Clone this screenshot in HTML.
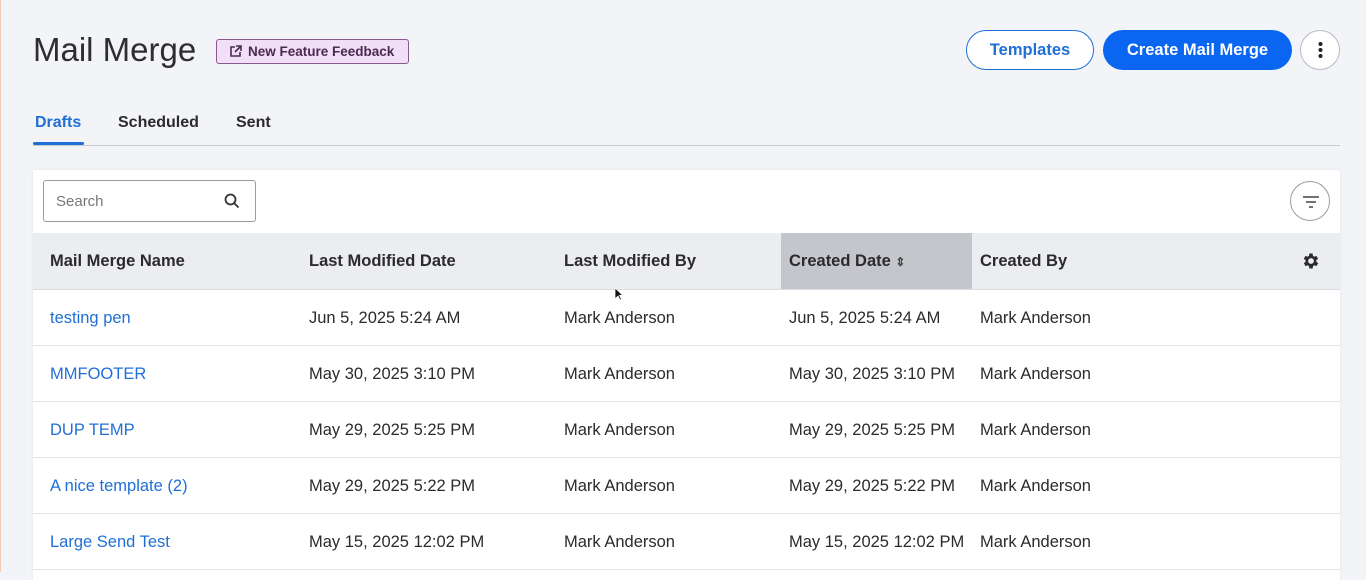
<!DOCTYPE html>
<html><head><style>
*{box-sizing:border-box;margin:0;padding:0}
body{width:1366px;height:572px;overflow:hidden;background:#f3f4f8;font-family:"Liberation Sans",sans-serif;color:#2b2b2e;position:relative}
.abs{position:absolute}
h1{position:absolute;left:33px;top:31px;font-size:33px;font-weight:400;color:#2e2e30}
.fb{position:absolute;left:216px;top:39px;width:193px;height:25px;border:1.5px solid #8a5a8e;background:#f1def7;border-radius:3px;font-size:13.5px;font-weight:700;color:#4a2b50;padding-left:31px;line-height:23px}
.btn{position:absolute;top:30px;height:40px;border-radius:20px;font-size:16.5px;font-weight:700;text-align:center;line-height:40px}
.tabs{position:absolute;left:33px;top:114px;font-size:16px;font-weight:700}
.tabs span{position:absolute;white-space:nowrap}
.card{position:absolute;left:33px;top:170px;width:1307px;height:410px;background:#fff;box-shadow:0 0 3px rgba(0,0,0,.08)}
.hdr{position:absolute;left:0;top:63px;width:1307px;height:57px;background:#ecedf1;border-bottom:1px solid #dcdde2}
.row{position:absolute;left:0;width:1307px;height:56px;border-bottom:1px solid #e3e4e8;font-size:16.5px}
.c{position:absolute;top:1px;line-height:55px;white-space:nowrap}
.hdr .c{font-weight:700;line-height:55px;font-size:16.5px}
a{color:#1f6fd6;text-decoration:none}
</style></head><body>
<div class="abs" style="left:0;top:0;width:1px;height:572px;background:#f3c9b8"></div>
<h1>Mail Merge</h1>
<div class="fb"><svg class="abs" style="left:12px;top:5px" width="13" height="13" viewBox="0 0 13 13" fill="none" stroke="#4a2b50" stroke-width="1.6"><path d="M6 2H2v9h9V7"/><path d="M7 1h5v5M12 1L6 7"/></svg>New Feature Feedback</div>
<div class="btn" style="left:966px;width:128px;border:1.5px solid #1f6fd6;background:#fff;color:#1f6fd6;line-height:39px">Templates</div>
<div class="btn" style="left:1103px;width:189px;background:#0a66f0;color:#fff">Create Mail Merge</div>
<div class="abs" style="left:1300px;top:30px;width:40px;height:40px;border-radius:50%;border:1px solid #b9bac0;background:#fff"><svg class="abs" style="left:17px;top:10px" width="5" height="18"><circle cx="2.5" cy="3" r="2" fill="#222"/><circle cx="2.5" cy="9" r="2" fill="#222"/><circle cx="2.5" cy="15" r="2" fill="#222"/></svg></div>
<div class="tabs"><span style="left:2px;color:#1f6fd6">Drafts</span><span style="left:85px">Scheduled</span><span style="left:203px">Sent</span></div>
<div class="abs" style="left:33px;top:145px;width:1307px;height:1px;background:#c9cace"></div>
<div class="abs" style="left:33px;top:142px;width:51px;height:3px;background:#1f6fd6;border-radius:2px"></div>
<div class="card">
<div class="abs" style="left:10px;top:10px;width:213px;height:42px;border:1px solid #9a9ba0;border-radius:3px;font-size:15px;color:#777;padding:12px 0 0 12px">Search
<svg class="abs" style="left:180px;top:12px" width="16" height="16" fill="none" stroke="#333" stroke-width="1.8"><circle cx="6.5" cy="6.5" r="5"/><path d="M10 10l4.5 4.5"/></svg></div>
<div class="abs" style="left:1257px;top:11px;width:40px;height:40px;border-radius:50%;border:1px solid #9a9ba0"><svg class="abs" style="left:11px;top:13px" width="18" height="14" stroke="#444" stroke-width="1.6"><path d="M1 2h16M4 7h10M7 12h4"/></svg></div>
<div class="hdr">
<div class="abs" style="left:748px;top:0;width:191px;height:56px;background:#c4c6cb"></div>
<div class="c" style="left:17px">Mail Merge Name</div>
<div class="c" style="left:276px">Last Modified Date</div>
<div class="c" style="left:531px">Last Modified By</div>
<div class="c" style="left:756px">Created Date <span style="font-size:12px;color:#444">⇕</span></div>
<div class="c" style="left:947px">Created By</div>
<svg class="abs" style="left:1268px;top:18px" width="20" height="20" viewBox="0 0 24 24"><path fill="#2b2b2e" d="M19.4 13a7.5 7.5 0 000-2l2.1-1.6-2-3.5-2.5 1a7.6 7.6 0 00-1.7-1L15 3h-4l-.4 2.9a7.6 7.6 0 00-1.7 1l-2.5-1-2 3.5L6.5 11a7.5 7.5 0 000 2l-2.1 1.6 2 3.5 2.5-1c.5.4 1.1.7 1.700 1L11 21h4l.4-2.9c.6-.3 1.2-.6 1.7-1l2.5 1 2-3.5zM13 15.5a3.5 3.5 0 110-7 3.5 3.5 0 010 7z" transform="translate(-1 0)"/></svg>
</div>
<div class="row" style="top:120px"><div class="c" style="left:17px"><a>testing pen</a></div><div class="c" style="left:276px">Jun 5, 2025 5:24 AM</div><div class="c" style="left:531px">Mark Anderson</div><div class="c" style="left:756px">Jun 5, 2025 5:24 AM</div><div class="c" style="left:947px">Mark Anderson</div></div>
<div class="row" style="top:176px"><div class="c" style="left:17px"><a>MMFOOTER</a></div><div class="c" style="left:276px">May 30, 2025 3:10 PM</div><div class="c" style="left:531px">Mark Anderson</div><div class="c" style="left:756px">May 30, 2025 3:10 PM</div><div class="c" style="left:947px">Mark Anderson</div></div>
<div class="row" style="top:232px"><div class="c" style="left:17px"><a>DUP TEMP</a></div><div class="c" style="left:276px">May 29, 2025 5:25 PM</div><div class="c" style="left:531px">Mark Anderson</div><div class="c" style="left:756px">May 29, 2025 5:25 PM</div><div class="c" style="left:947px">Mark Anderson</div></div>
<div class="row" style="top:288px"><div class="c" style="left:17px"><a>A nice template (2)</a></div><div class="c" style="left:276px">May 29, 2025 5:22 PM</div><div class="c" style="left:531px">Mark Anderson</div><div class="c" style="left:756px">May 29, 2025 5:22 PM</div><div class="c" style="left:947px">Mark Anderson</div></div>
<div class="row" style="top:344px"><div class="c" style="left:17px"><a>Large Send Test</a></div><div class="c" style="left:276px">May 15, 2025 12:02 PM</div><div class="c" style="left:531px">Mark Anderson</div><div class="c" style="left:756px">May 15, 2025 12:02 PM</div><div class="c" style="left:947px">Mark Anderson</div></div>
</div>
<svg class="abs" style="left:614px;top:287px" width="10" height="15"><path d="M1 1v11l3-3 2 4 1.5-.7-2-4H9z" fill="#111" stroke="#fff" stroke-width=".8"/></svg>
</body></html>
